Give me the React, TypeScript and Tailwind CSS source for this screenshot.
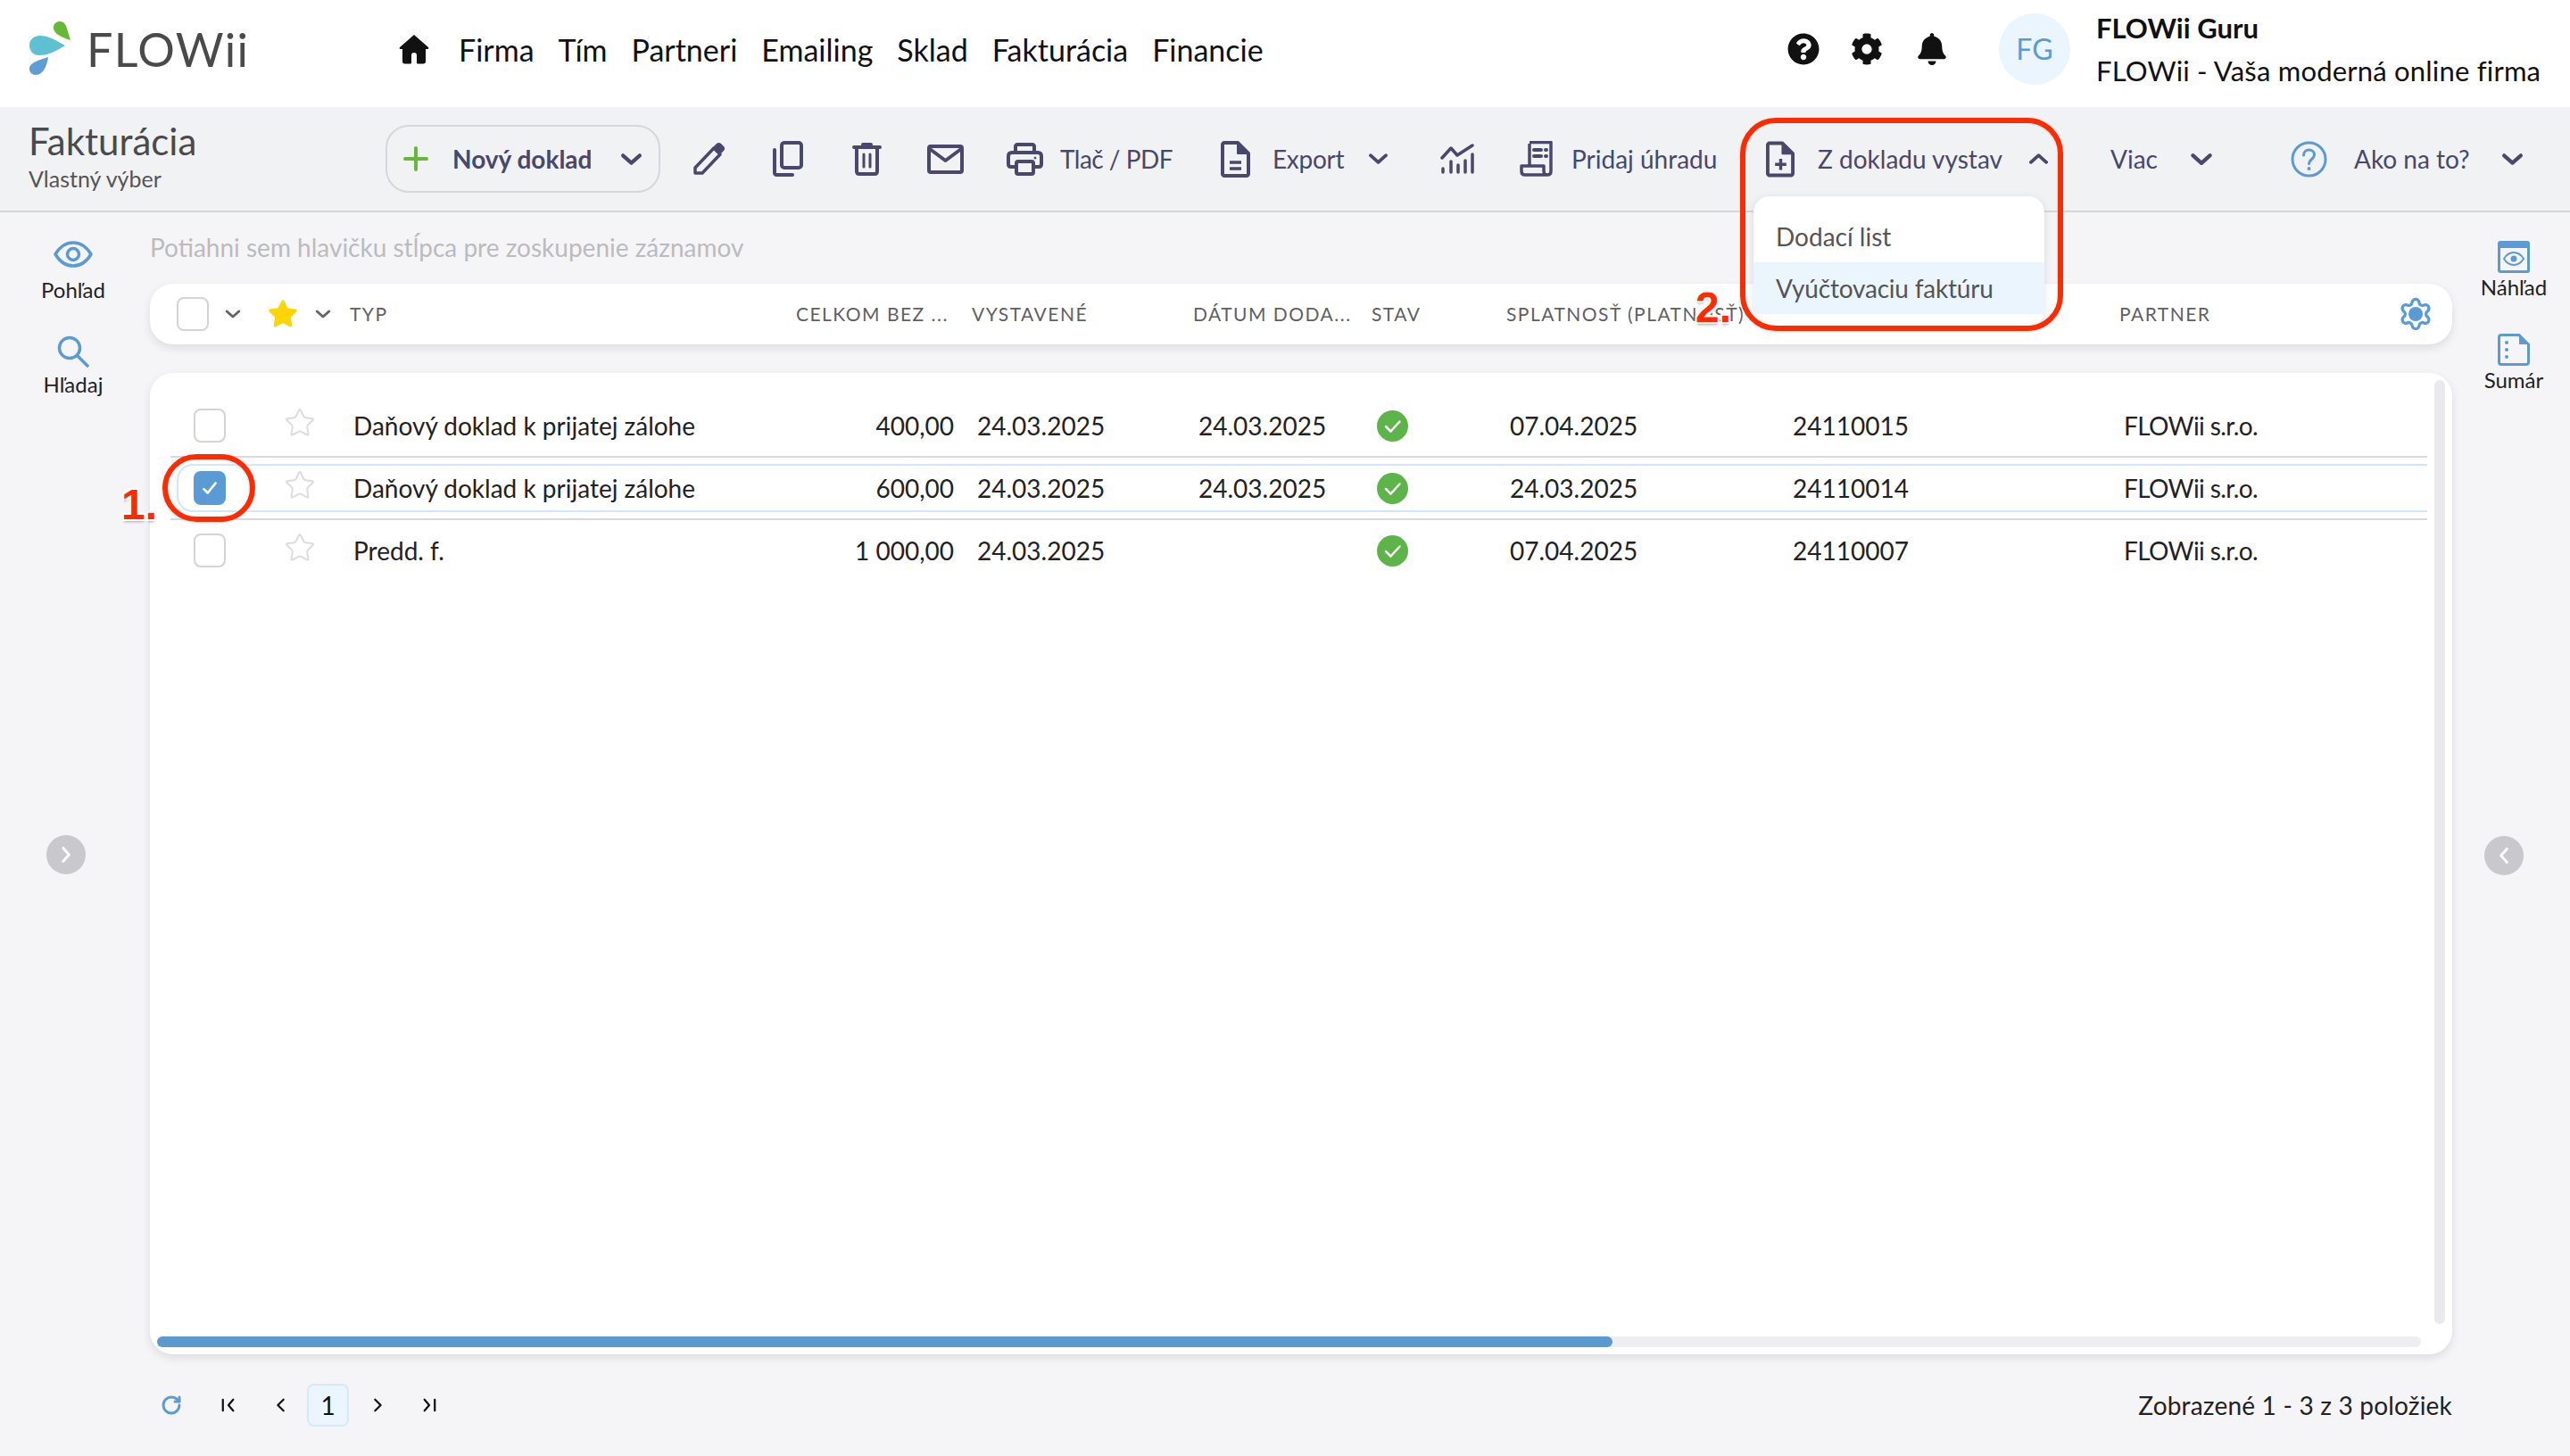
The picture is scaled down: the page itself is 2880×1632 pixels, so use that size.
import { Star, Settings, RotateCw } from "lucide-react"
import { FaBell, FaCog, FaQuestionCircle } from "react-icons/fa"

const rows = [
  { typ: "Daňový doklad k prijatej zálohe", sum: "400,00", vyst: "24.03.2025", dod: "24.03.2025", spl: "07.04.2025", cislo: "24110015", selected: false },
  { typ: "Daňový doklad k prijatej zálohe", sum: "600,00", vyst: "24.03.2025", dod: "24.03.2025", spl: "24.03.2025", cislo: "24110014", selected: true },
  { typ: "Predd. f.", sum: "1 000,00", vyst: "24.03.2025", dod: "", spl: "07.04.2025", cislo: "24110007", selected: false },
]

const navItems = ["Firma", "Tím", "Partneri", "Emailing", "Sklad", "Fakturácia", "Financie"]

function Chevron({ up = false, className = "" }: { up?: boolean; className?: string }) {
  return (
    <svg viewBox="0 0 24 14" fill="none" className={className}>
      <path d={up ? "M3 11 12 3l9 8" : "M3 3l9 8 9-8"} stroke="currentColor" strokeWidth="4" strokeLinecap="round" strokeLinejoin="round" />
    </svg>
  )
}

function Logo() {
  return (
    <svg viewBox="0 0 48 62" className="w-[48px] h-[62px]">
      <path d="M46 21C40 19 27 15 27 7c0-5 4-7 7-7 5 0 7 4 8 8z" fill="#66b934" />
      <path d="M40 27C30 33 22 38 11 38 4 38 0 33 0 27c0-7 5-11 12-11 10 0 19 6 28 11z" fill="#5dc0d3" />
      <path d="M21 40c-1 8-5 20-14 20-4 0-7-3-7-7 0-7 12-10 21-13z" fill="#5f9dd6" />
    </svg>
  )
}

function HomeIcon() {
  return (
    <svg viewBox="0 0 34 34" className="w-[34px] h-[34px] ml-[175px]" fill="#111">
      <path d="M17 1 1 15c-1 1 0 2 1 2h2v14c0 1.500 1 2.500 2.500 2.500h6c1 0 1.500-.5 1.500-1.500v-8c0-2 1-3 3-3s3 1 3 3v8c0 1 .5 1.500 1.500 1.500h6c1.500 0 2.500-1 2.500-2.500V17h2c1 0 2-1 1-2z" />
    </svg>
  )
}

function PencilIcon() {
  return (
    <svg viewBox="0 0 38 38" fill="none" className="w-[38px] h-[38px] ml-[36px] text-[#47486b]">
      <path d="M3 35v-6L24 7l7 7-20 21z" stroke="currentColor" strokeWidth="3.500" strokeLinejoin="round" />
      <path d="M23 6l4-4c1.500-1.500 3.500-1.500 5 0l3 3c1.500 1.500 1.500 3.500 0 5l-4 4z" fill="currentColor" />
    </svg>
  )
}

function CopyIcon() {
  return (
    <svg viewBox="0 0 34 40" fill="none" stroke="#47486b" strokeWidth="4" className="w-[34px] h-[40px] ml-[52px]">
      <rect x="10" y="2" width="22" height="28" rx="3" />
      <path d="M2 10v26c0 1 1 2 2 2h18" strokeLinecap="round" />
    </svg>
  )
}

function TrashIcon() {
  return (
    <svg viewBox="0 0 33 38" fill="none" stroke="#47486b" strokeWidth="4" className="w-[33px] h-[38px] ml-[55px]">
      <path d="M2 6h29M12 3h9" strokeLinecap="round" />
      <path d="M5 7v26c0 2 1 3 3 3h17c2 0 3-1 3-3V7" />
      <path d="M13 14v14M20 14v14" strokeWidth="3" strokeLinecap="round" />
    </svg>
  )
}

function MailIcon() {
  return (
    <svg viewBox="0 0 41 33" fill="none" stroke="#47486b" strokeWidth="4" className="w-[41px] h-[33px] ml-[51px]">
      <rect x="2" y="2" width="37" height="29" rx="2" />
      <path d="M3 5l17.500 13L38 5" strokeLinejoin="round" />
    </svg>
  )
}

function PrintIcon() {
  return (
    <svg viewBox="0 0 41 37" fill="none" stroke="#47486b" strokeWidth="4" className="w-[41px] h-[37px] ml-[48px]">
      <path d="M10 11V4c0-1 1-2 2-2h17c1 0 2 1 2 2v7" />
      <path d="M10 27H5c-2 0-3-1-3-3v-9c0-2 1-4 4-4h29c3 0 4 2 4 4v9c0 2-1 3-3 3h-5" />
      <rect x="11" y="21" width="19" height="14" rx="2" />
      <circle cx="32" cy="17" r="1" fill="#47486b" strokeWidth="1" />
    </svg>
  )
}

function DocIcon({ plus = false, className = "" }: { plus?: boolean; className?: string }) {
  return (
    <svg viewBox="0 0 33 41" fill="none" stroke="#47486b" strokeWidth="4" className={className}>
      <path d="M4 2h15l12 12v23c0 1-1 2-2 2H4c-1 0-2-1-2-2V4c0-1 1-2 2-2z" strokeLinejoin="round" />
      <path d="M19 2l12 12H19z" fill="#47486b" stroke="#47486b" strokeWidth="2" strokeLinejoin="round" />
      {plus ? <path d="M17 20v13M10.500 26.500h13" strokeWidth="3.500" /> : <path d="M10 24h13M10 31h13" strokeWidth="3.500" />}
    </svg>
  )
}

function ChartIcon() {
  return (
    <svg viewBox="0 0 38 34" fill="none" stroke="#47486b" strokeWidth="3.500" strokeLinecap="round" strokeLinejoin="round" className="w-[38px] h-[34px] ml-[58px]">
      <path d="M2 16 12 5l7 8L36 2" />
      <path d="M3 28v4M12 20v12M20 24v8M28 19v13M36 12v20" />
    </svg>
  )
}

function ReceiptIcon() {
  return (
    <svg viewBox="0 0 37 40" fill="none" stroke="#47486b" strokeWidth="3.500" className="w-[37px] h-[40px] ml-[51px]">
      <path d="M11 1.500h24V34c0 2.500-1.500 4-4 4H6c-2.500 0-4-1.500-4-4v-6h25v6c0 2 2 4 4 4" strokeLinejoin="round" />
      <path d="M11 28V3" />
      <path d="M16 10h8M16 17h8" strokeWidth="4" strokeLinecap="round" />
      <path d="M29 10h1M29 17h1" strokeWidth="4" strokeLinecap="round" />
    </svg>
  )
}

function EyeIcon() {
  return (
    <svg viewBox="0 0 44 30" fill="none" stroke="#5b9bd5" strokeWidth="3.500" className="w-[44px] h-[30px]">
      <path d="M2 15C8 5 15 2 22 2s14 3 20 13c-6 10-13 13-20 13S8 25 2 15z" strokeLinejoin="round" />
      <circle cx="22" cy="15" r="6.500" />
    </svg>
  )
}

function SearchIcon() {
  return (
    <svg viewBox="0 0 36 36" fill="none" stroke="#5b9bd5" strokeWidth="3.500" strokeLinecap="round" className="w-[36px] h-[36px]">
      <circle cx="14" cy="14" r="11.500" />
      <path d="M23 23l11 11" />
    </svg>
  )
}

function PreviewIcon() {
  return (
    <svg viewBox="0 0 36 36" className="w-[36px] h-[36px]">
      <rect x="0" y="0" width="36" height="36" rx="3" fill="#5b9bd5" />
      <rect x="3" y="8" width="30" height="25" fill="#f5f5f8" />
      <path d="M7 20c3-5 7-7 11-7s8 2 11 7c-3 5-7 7-11 7s-8-2-11-7z" fill="none" stroke="#5b9bd5" strokeWidth="2" />
      <circle cx="18" cy="20" r="3.500" fill="#5b9bd5" />
    </svg>
  )
}

function SummaryIcon() {
  return (
    <svg viewBox="0 0 36 36" fill="none" className="w-[36px] h-[36px]">
      <path d="M4 1.500h20L34.500 12v20c0 1.500-1 2.500-2.500 2.500H4c-1.500 0-2.500-1-2.500-2.500V4c0-1.500 1-2.500 2.500-2.500z" stroke="#5b9bd5" strokeWidth="3" />
      <path d="M24 2l10 10H24z" fill="#5b9bd5" />
      <circle cx="10" cy="10" r="2" fill="#5b9bd5" />
      <circle cx="10" cy="18" r="2" fill="#5b9bd5" />
      <circle cx="10" cy="26" r="2" fill="#5b9bd5" />
    </svg>
  )
}

function StatusOk() {
  return (
    <svg viewBox="0 0 35 35" className="w-[35px] h-[35px]">
      <circle cx="17.500" cy="17.500" r="17.500" fill="#5db54a" />
      <path d="M10 18l5.500 5.500L25.500 12.500" fill="none" stroke="#fff" strokeWidth="2.500" strokeLinecap="round" strokeLinejoin="round" />
    </svg>
  )
}

function PagerIcon({ d, className = "" }: { d: string; className?: string }) {
  return (
    <svg viewBox="0 0 20 18" fill="none" stroke="#111" strokeWidth="2.500" strokeLinecap="round" strokeLinejoin="round" className={className}>
      <path d={d} />
    </svg>
  )
}

function Checkbox({ checked = false }: { checked?: boolean }) {
  if (checked) {
    return (
      <div className="w-[36px] h-[38px] rounded-[8px] bg-[#5b9bd5] flex items-center justify-center">
        <svg viewBox="0 0 20 20" fill="none" className="w-[22px] h-[22px]">
          <path d="M4 11l4 4 8-10" stroke="#fff" strokeWidth="2.500" strokeLinecap="round" strokeLinejoin="round" />
        </svg>
      </div>
    )
  }
  return <div className="w-[36px] h-[38px] rounded-[8px] border-2 border-[#d3d3de] bg-white" />
}

function Top() {
  return (
    <div className="h-[120px] bg-white flex items-center pl-[33px] pr-[32px] pb-[10px]">
      <Logo />
      <span className="ml-[16px] text-[52px] leading-none tracking-[1.4px] text-[#4a4a4a] w-[175px]">FLOWii</span>
      <HomeIcon />
      <nav className="ml-[33px] flex items-center gap-[27px] text-[34px] text-[#111]">
        {navItems.map((n) => (
          <span key={n}>{n}</span>
        ))}
      </nav>
      <div className="ml-auto flex items-center">
        <FaQuestionCircle className="w-[36px] h-[36px] text-[#111]" />
        <FaCog className="w-[36px] h-[36px] text-[#111] ml-[35px]" />
        <FaBell className="w-[32px] h-[36px] text-[#111] ml-[39px]" />
        <div className="ml-[59px] w-[80px] h-[80px] rounded-full bg-[#ebf5fd] flex items-center justify-center text-[32px] text-[#5b9bd5]">FG</div>
        <div className="ml-[29px] w-[499px] text-[#111]">
          <div className="text-[31px] font-bold leading-[48px]">FLOWii Guru</div>
          <div className="text-[31px] tracking-[0.2px] leading-[48px] whitespace-nowrap">FLOWii - Vaša moderná online firma</div>
        </div>
      </div>
    </div>
  )
}

function Toolbar() {
  return (
    <div className="h-[118px] bg-[#f1f2f4] border-b-2 border-[#d6d6da] flex items-center pl-[33px] text-[28px] text-[#47486b] whitespace-nowrap">
      <div className="w-[399px] -mt-[4px]">
        <div className="text-[42px] leading-[44px] text-[#4a4a4a] -ml-px">Fakturácia</div>
        <div className="text-[25px] leading-[32px] mt-[4px] text-[#555] -ml-px">Vlastný výber</div>
      </div>
      <button className="w-[308px] h-[76px] rounded-[26px] border-2 border-[#d5d6de] flex items-center pl-[18px]">
        <svg viewBox="0 0 28 30" className="w-[28px] h-[30px]" fill="none" stroke="#66b934" strokeWidth="4" strokeLinecap="round">
          <path d="M14 3v24M2 15h24" />
        </svg>
        <span className="ml-[27px] font-bold w-[160px] text-left">Nový doklad</span>
        <Chevron className="ml-[28px] w-[25px] h-[15px]" />
      </button>
      <PencilIcon />
      <CopyIcon />
      <TrashIcon />
      <MailIcon />
      <PrintIcon />
      <span className="ml-[19px] w-[124px] tracking-[-0.5px]">Tlač / PDF</span>
      <DocIcon className="ml-[56px] w-[33px] h-[41px]" />
      <span className="ml-[25px] w-[78px] tracking-[-0.3px]">Export</span>
      <Chevron className="ml-[29px] w-[23px] h-[14px]" />
      <ChartIcon />
      <ReceiptIcon />
      <span className="ml-[21px] w-[161px]">Pridaj úhradu</span>
      <DocIcon plus className="ml-[57px] w-[32px] h-[41px]" />
      <span className="ml-[26px] w-[206px]">Z dokladu vystav</span>
      <Chevron up className="ml-[30px] w-[23px] h-[14px]" />
      <span className="ml-[69px] w-[55px]">Viac</span>
      <Chevron className="ml-[34px] w-[26px] h-[15px]" />
      <svg viewBox="0 0 41 41" fill="none" className="ml-[87px] w-[41px] h-[41px]">
        <circle cx="20.500" cy="20.500" r="18.500" stroke="#5b9bd5" strokeWidth="3" />
        <path d="M14.500 16c0-4 3-6 6-6s6 2 6 5.500c0 5-6 5-6 10" stroke="#5b9bd5" strokeWidth="3" strokeLinecap="round" />
        <circle cx="20.500" cy="31" r="2" fill="#5b9bd5" />
      </svg>
      <span className="ml-[30px] w-[129px]">Ako na to?</span>
      <Chevron className="ml-[36px] w-[25px] h-[15px]" />
    </div>
  )
}

function SideItem({ icon, label, labelClass }: { icon: React.ReactNode; label: string; labelClass: string }) {
  return (
    <div className="flex flex-col items-center">
      <div className="flex items-center justify-center">{icon}</div>
      <span className={`text-[24px] leading-[28px] text-[#222] ${labelClass}`}>{label}</span>
    </div>
  )
}

function SideArrow({ left = false }: { left?: boolean }) {
  return (
    <div className="w-[44px] h-[44px] rounded-full bg-[#c9c9cd] flex items-center justify-center">
      <svg viewBox="0 0 14 24" fill="none" className="w-[12px] h-[20px]">
        <path d={left ? "M11 3 3 12l8 9" : "M3 3l8 9-8 9"} stroke="#fff" strokeWidth="3.500" strokeLinecap="round" strokeLinejoin="round" />
      </svg>
    </div>
  )
}

function HeaderRow() {
  const head = "text-[21px] tracking-[0.07em] text-[#5f5f64] whitespace-nowrap"
  return (
    <div className="h-[68px] rounded-[26px] bg-white shadow-[0_4px_10px_rgba(70,70,90,0.14)] pl-[30px] grid grid-cols-[54px_47px_54px_39px_500px_197px_248px_200px_151px_687px_312px_1fr] items-center overflow-hidden">
      <Checkbox />
      <Chevron className="w-[18px] h-[12px] text-[#666]" />
      <Star className="w-[36px] h-[36px] text-[#ffd400]" fill="#ffd400" strokeWidth={1} />
      <Chevron className="w-[18px] h-[12px] text-[#666]" />
      <span className={head}>TYP</span>
      <span className={head}>CELKOM BEZ ...</span>
      <span className={head}>VYSTAVENÉ</span>
      <span className={head}>DÁTUM DODA...</span>
      <span className={head}>STAV</span>
      <span className={head}>SPLATNOSŤ (PLATNOSŤ)</span>
      <span className={head}>PARTNER</span>
      <span className="relative w-[38px] h-[40px]">
        <Settings className="w-[40px] h-[40px] text-[#5b9bd5]" strokeWidth={2} />
        <span className="absolute left-[12px] top-[12px] w-[16px] h-[16px] rounded-full bg-[#5b9bd5]" />
      </span>
    </div>
  )
}

function Table() {
  return (
    <div className="relative mt-[32px] h-[1100px] rounded-[26px] bg-white shadow-[0_4px_10px_rgba(70,70,90,0.14)] pt-[25px] pl-[23px] pr-[28px] text-[28px] text-[#222]">
      {rows.map((r, i) => (
        <div key={r.cislo} className={`h-[70px] pl-[7px] py-[7px] ${i < rows.length - 1 ? "border-b-2 border-[#d8d8df]" : ""}`}>
          <div className={`h-[54px] pl-[17px] border-2 rounded-l-[18px] grid grid-cols-[101px_79px_472px_200px_274px_200px_149px_317px_371px_1fr] items-center whitespace-nowrap ${r.selected ? "border-[#cfe6fb] border-r-0" : "border-transparent"}`}>
            <Checkbox checked={r.selected} />
            <Star className="w-[36px] h-[36px] text-[#dcdcdc] -mt-[6px]" strokeWidth={1.3} />
            <span className="-ml-px">{r.typ}</span>
            <span className="text-right">{r.sum}</span>
            <span className="pl-[26px]">{r.vyst}</span>
            <span>{r.dod}</span>
            <StatusOk />
            <span>{r.spl}</span>
            <span>{r.cislo}</span>
            <span className="tracking-[-0.6px]">FLOWii s.r.o.</span>
          </div>
        </div>
      ))}
      <div className="absolute right-[8px] top-[8px] bottom-[34px] w-[12px] rounded-full bg-[#e9e9ee]" />
      <div className="absolute left-[8px] right-[35px] bottom-[8px] h-[12px] rounded-full bg-[#eeeef1]">
        <div className="w-[1631px] h-full rounded-full bg-[#5b9ad1]" />
      </div>
    </div>
  )
}

function Pager() {
  return (
    <div className="mt-[33px] h-[48px] flex items-center text-[28px] text-[#222]">
      <RotateCw className="ml-[12px] w-[24px] h-[24px] text-[#5b9bd5]" strokeWidth={3} />
      <PagerIcon d="M3 2v14M16 2 10 9l6 7" className="ml-[43px] w-[18px] h-[16px]" />
      <PagerIcon d="M13 2 6 9l7 7" className="ml-[41px] w-[18px] h-[18px]" />
      <div className="ml-[20px] w-[47px] h-[48px] rounded-[8px] bg-[#ebf5fd] border-2 border-[#d4e9fd] flex items-center justify-center text-[#111]">1</div>
      <PagerIcon d="M7 2l7 7-7 7" className="ml-[23px] w-[18px] h-[18px]" />
      <PagerIcon d="M4 2l6 7-6 7M17 2v14" className="ml-[40px] w-[18px] h-[16px]" />
      <span className="ml-auto tracking-[0.2px]">Zobrazené 1 - 3 z 3 položiek</span>
    </div>
  )
}

export default function App() {
  return (
    <div className="relative w-[2880px] h-[1632px] overflow-hidden bg-[#f5f5f8] font-['Lato','Noto_Sans',sans-serif]">
      <Top />
      <Toolbar />
      <div className="flex">
        <aside className="w-[168px] pr-[4px] pt-[32px] flex flex-col items-center">
          <SideItem icon={<EyeIcon />} label="Pohľad" labelClass="mt-[11px]" />
          <div className="h-[37px]" />
          <SideItem icon={<SearchIcon />} label="Hľadaj" labelClass="mt-[5px]" />
          <div className="mt-[491px] mr-[16px]">
            <SideArrow />
          </div>
        </aside>
        <main className="w-[2580px]">
          <div className="mt-[21px] h-[36px] leading-[36px] text-[28px] text-[#bbbbbf]">Potiahni sem hlavičku stĺpca pre zoskupenie záznamov</div>
          <div className="mt-[23px]">
            <HeaderRow />
          </div>
          <Table />
          <Pager />
        </main>
        <aside className="w-[132px] pl-[6px] pt-[32px] flex flex-col items-center">
          <SideItem icon={<PreviewIcon />} label="Náhľad" labelClass="mt-[2px]" />
          <div className="h-[38px]" />
          <SideItem icon={<SummaryIcon />} label="Sumár" labelClass="mt-[2px]" />
          <div className="mt-[497px] mr-[22px]">
            <SideArrow left />
          </div>
        </aside>
      </div>

      {/* dropdown */}
      <div className="absolute left-[1965px] top-[220px] w-[326px] h-[146px] rounded-[18px] bg-white shadow-[0_2px_8px_rgba(70,70,90,0.15)] pt-[22px] text-[28px] text-[#555]">
        <div className="h-[52px] pl-[25px] leading-[46px]">Dodací list</div>
        <div className="h-[58px] pl-[25px] leading-[58px] bg-[#ebf5fd] tracking-[-0.2px]">Vyúčtovaciu faktúru</div>
      </div>

      {/* red annotations */}
      <div className="absolute left-[1950px] top-[132px] w-[362px] h-[239px] rounded-[40px] border-[6px] border-[#ff2a00]" />
      <div className="absolute left-[182px] top-[509px] w-[104px] h-[76px] rounded-[38px] border-[6px] border-[#ff2a00]" />
      <span className="absolute left-[136px] top-[540px] font-['Liberation_Sans',sans-serif] font-bold text-[48px] leading-[52px] text-[#ff2a00] [text-shadow:2px_2px_0_#fff,-2px_-2px_0_#fff,2px_-2px_0_#fff,-2px_2px_0_#fff,0_3px_3px_#aaa]">1.</span>
      <span className="absolute left-[1900px] top-[319px] font-['Liberation_Sans',sans-serif] font-bold text-[48px] leading-[52px] text-[#ff2a00] [text-shadow:2px_2px_0_#fff,-2px_-2px_0_#fff,2px_-2px_0_#fff,-2px_2px_0_#fff,0_3px_3px_#aaa]">2.</span>
    </div>
  )
}
